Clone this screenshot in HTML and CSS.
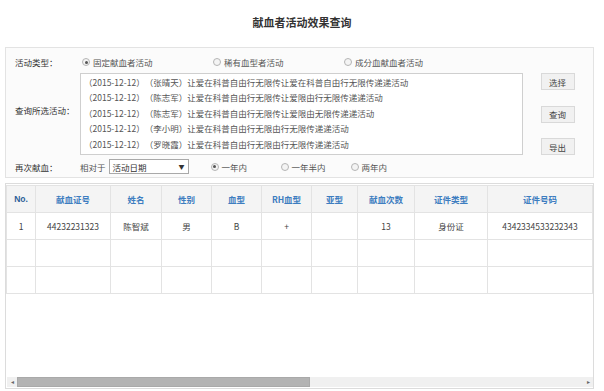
FILE: index.html
```html
<!DOCTYPE html>
<html lang="zh-CN">
<head>
    <meta charset="UTF-8">
    <title>献血者活动效果查询</title>
    <link rel="stylesheet" href="styles.css">
</head>
<body>
    <h1 class="page-title">献血者活动效果查询</h1>

    <div class="query-panel">
        <div class="label">活动类型：</div>
        <div class="type-row">
            <span class="opt"><i class="radio checked"></i>固定献血者活动</span>
            <span class="opt"><i class="radio"></i>稀有血型者活动</span>
            <span class="opt"><i class="radio"></i>成分血献血者活动</span>
        </div>
        <div></div>

        <div class="label label-mid">查询所选活动：</div>
        <div class="activity-list">
            <div>（2015-12-12）（张晴天）让爱在科普自由行无限传让爱在科普自由行无限传递递活动</div>
            <div>（2015-12-12）（陈志军）让爱在科普自由行无限传让爱限由行无限传递递活动</div>
            <div>（2015-12-12）（陈志军）让爱在科普自由行无限传让爱限由无限传递递活动</div>
            <div>（2015-12-12）（李小明）让爱在科普自由行无限由行无限传递递活动</div>
            <div>（2015-12-12）（罗晓霞）让爱在科普自由行无限由行无限传递递活动</div>
        </div>
        <div class="btn-col">
            <button class="btn">选择</button>
            <button class="btn">查询</button>
            <button class="btn">导出</button>
        </div>

        <div class="label">再次献血：</div>
        <div class="again-row">
            <span class="rel">相对于</span>
            <span class="select">活动日期<b>▼</b></span>
            <span class="opt opt-year"><i class="radio checked"></i>一年内</span>
            <span class="opt opt-year"><i class="radio"></i>一年半内</span>
            <span class="opt"><i class="radio"></i>两年内</span>
        </div>
        <div></div>
    </div>

    <div class="result-box">
        <table class="result-table">
            <colgroup>
                <col style="width:29px"><col style="width:75px"><col style="width:51px">
                <col style="width:50px"><col style="width:50px"><col style="width:50px">
                <col style="width:46px"><col style="width:57px"><col style="width:73px">
                <col>
            </colgroup>
            <thead>
                <tr>
                    <th class="no">No.</th><th>献血证号</th><th>姓名</th><th>性别</th><th>血型</th>
                    <th>RH血型</th><th>亚型</th><th>献血次数</th><th>证件类型</th><th>证件号码</th>
                </tr>
            </thead>
            <tbody>
                <tr>
                    <td>1</td><td>44232231323</td><td>陈智斌</td><td>男</td><td>B</td>
                    <td>+</td><td></td><td>13</td><td>身份证</td><td>4342334533232343</td>
                </tr>
                <tr><td></td><td></td><td></td><td></td><td></td><td></td><td></td><td></td><td></td><td></td></tr>
                <tr><td></td><td></td><td></td><td></td><td></td><td></td><td></td><td></td><td></td><td></td></tr>
            </tbody>
        </table>
        <div class="hscroll">
            <span class="arrow">◂</span>
            <span class="thumb"></span>
            <span class="track"></span>
            <span class="arrow">▸</span>
        </div>
    </div>
</body>
</html>
```

FILE: styles.css
```css
body {
    margin: 0;
    background: #fff;
    color: #333;
    font-family: "Noto Sans CJK SC", "Liberation Sans", sans-serif;
    font-size: 8.5px;
    text-spacing-trim: space-all;
    font-feature-settings: "chws" 0, "halt" 0;
}

.page-title {
    margin: 0;
    height: 47px;
    line-height: 45px;
    text-align: center;
    font-size: 11px;
    font-weight: bold;
    color: #333;
}

.query-panel {
    margin: 0 10px 0 5px;
    padding: 6px 0 2px;
    border: 1px solid #e3e3e3;
    background: #fbfbfb;
    display: grid;
    grid-template-columns: 74px 443px 1fr;
    grid-template-rows: 16px 82px 17px;
    row-gap: 3px;
    box-sizing: border-box;
    height: 131px;
}

.label {
    padding-left: 9px;
    display: flex;
    align-items: center;
    color: #333;
}

.label-mid {
    padding-bottom: 9px;
}

.type-row,
.again-row {
    display: flex;
    align-items: center;
    color: #555;
}

.type-row {
    padding-left: 2px;
}

.type-row .opt {
    width: 131px;
}

.opt {
    display: flex;
    align-items: center;
}

.radio {
    display: inline-block;
    width: 6px;
    height: 6px;
    border: 1px solid #b5b5b5;
    border-radius: 50%;
    background: #f4f4f4;
    margin-right: 3px;
    position: relative;
}

.radio.checked::after {
    content: "";
    position: absolute;
    left: 1.5px;
    top: 1.5px;
    width: 3px;
    height: 3px;
    border-radius: 50%;
    background: #555;
}

.activity-list {
    border: 1px solid #cfcfcf;
    background: #fff;
    padding: 1px 0 0 3px;
    line-height: 15.4px;
    color: #555;
    white-space: nowrap;
    overflow: hidden;
}

.btn-col {
    display: flex;
    flex-direction: column;
    justify-content: space-between;
    align-items: center;
    padding: 0 1px 0 0;
}

.btn {
    width: 34px;
    height: 17px;
    padding: 0;
    border: 1px solid #d9d9d9;
    background: #f1f1f1;
    font-family: inherit;
    font-size: 8.5px;
    color: #444;
}

.rel {
    margin-right: 3px;
}

.select {
    width: 80px;
    height: 15px;
    box-sizing: border-box;
    border: 1px solid #a9a9a9;
    background: #fff;
    display: flex;
    align-items: center;
    justify-content: space-between;
    padding: 0 3px;
    margin-right: 22px;
    color: #333;
}

.select b {
    font-weight: normal;
    font-size: 6px;
}

.opt-year {
    width: 70px;
}

.result-box {
    margin: 5px 10px 0 5px;
    border: 1px solid #dcdcdc;
    height: 206px;
    box-sizing: border-box;
    padding: 1px 0 1px;
    display: flex;
    flex-direction: column;
}

.result-table {
    width: 100%;
    table-layout: fixed;
    border-collapse: collapse;
}

.result-table th,
.result-table td {
    border: 1px solid #e3e3e3;
    text-align: center;
    padding: 0;
    white-space: nowrap;
    overflow: hidden;
}

.result-table th {
    height: 26px;
    background: #f4f4f4;
    color: #3d7dc0;
    font-weight: bold;
}

.result-table th.no {
    color: #2d5f99;
    font-family: "Liberation Sans", sans-serif;
}

.result-table td {
    height: 26px;
    color: #444;
}

.hscroll {
    margin-top: auto;
    height: 10px;
    display: flex;
    align-items: stretch;
    background: #f0f0f0;
    margin-left: 1px;
}

.hscroll .arrow {
    width: 10px;
    font-size: 6px;
    line-height: 10px;
    text-align: center;
    color: #666;
}

.hscroll .thumb {
    width: 293px;
    background: #b3b3b3;
    border: 1px solid #a9a9a9;
    box-sizing: border-box;
}

.hscroll .track {
    flex: 1;
}
```
